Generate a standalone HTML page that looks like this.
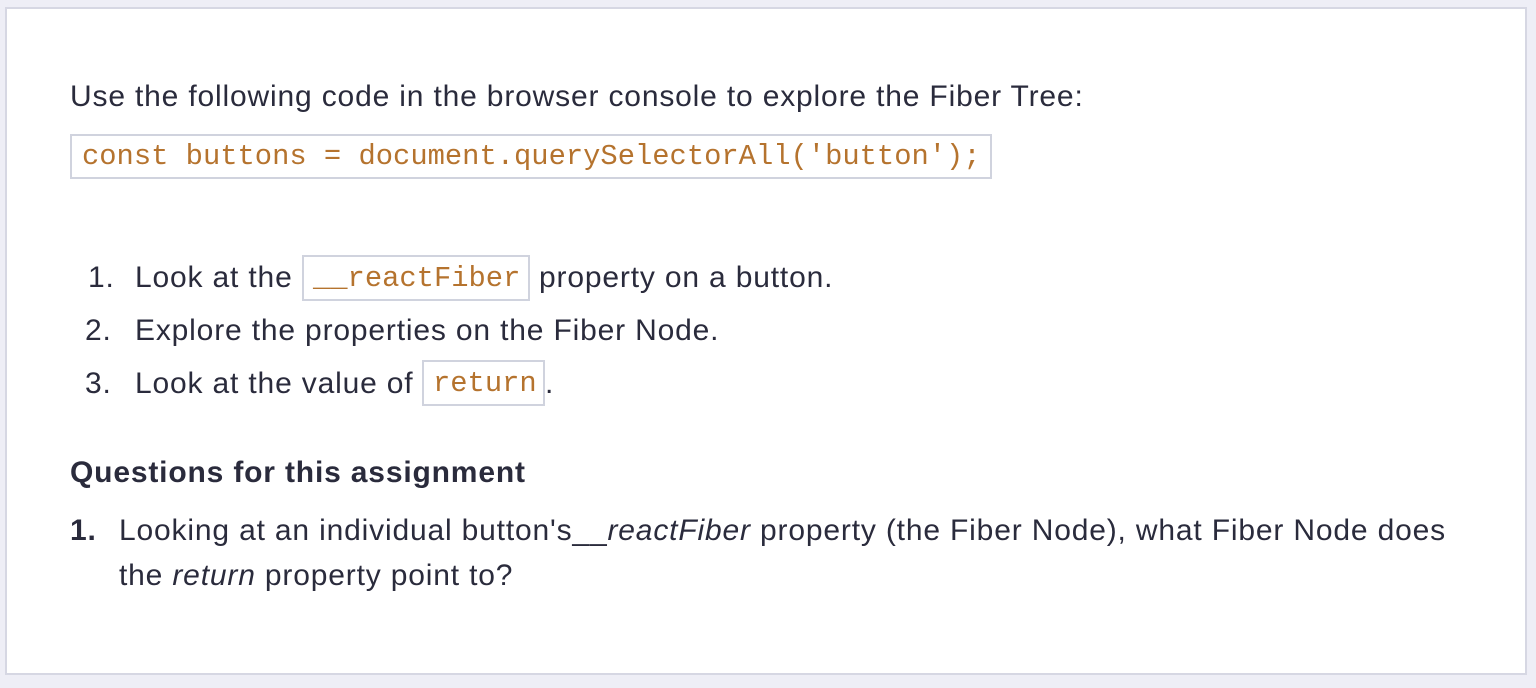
<!DOCTYPE html>
<html><head><meta charset="utf-8"><style>
html,body{margin:0;padding:0;width:1536px;height:688px;background:#eeeef6;overflow:hidden}
.card{position:absolute;left:5px;top:7px;width:1522px;height:668px;background:#fff;border:2px solid #d6d7e3;box-sizing:border-box}
.t{position:absolute;font-family:"Liberation Sans",sans-serif;font-size:30px;letter-spacing:0.83px;color:#2a2b3c;white-space:nowrap;line-height:34px}
.c{font-family:"Liberation Mono",monospace;color:#b5732e;font-size:28.8px;letter-spacing:0}
.box{position:absolute;border:2px solid #d0d3de;box-sizing:border-box;background:#fff}
</style></head><body>
<div class="card"></div>
<div class="t" style="left:70px;top:80px">Use the following code in the browser console to explore the Fiber Tree:</div>
<div class="box" style="left:70px;top:134px;width:922px;height:45px"></div>
<div class="t c" style="left:82px;top:140px">const buttons = document.querySelectorAll('button');</div>

<div class="t" style="left:88px;top:261px">1.</div>
<div class="t" style="left:135px;top:261px">Look at the</div>
<div class="box" style="left:302px;top:255px;width:228px;height:46px"></div>
<div class="t c" style="left:313px;top:262px">__reactFiber</div>
<div class="t" style="left:539px;top:261px">property on a button.</div>

<div class="t" style="left:85px;top:314px">2.</div>
<div class="t" style="left:135px;top:314px">Explore the properties on the Fiber Node.</div>

<div class="t" style="left:85px;top:367px">3.</div>
<div class="t" style="left:135px;top:367px">Look at the value of</div>
<div class="box" style="left:422px;top:360px;width:123px;height:46px"></div>
<div class="t c" style="left:433px;top:367px">return</div>
<div class="t" style="left:545px;top:367px">.</div>

<div class="t" style="left:70px;top:456px;font-weight:bold">Questions for this assignment</div>
<div class="t" style="left:70px;top:514px;font-weight:bold">1.</div>
<div class="t" style="left:119px;top:514px">Looking at an individual button's__<i>reactFiber</i> property (the Fiber Node), what Fiber Node does</div>
<div class="t" style="left:119px;top:559px">the <i>return</i> property point to?</div>
</body></html>
